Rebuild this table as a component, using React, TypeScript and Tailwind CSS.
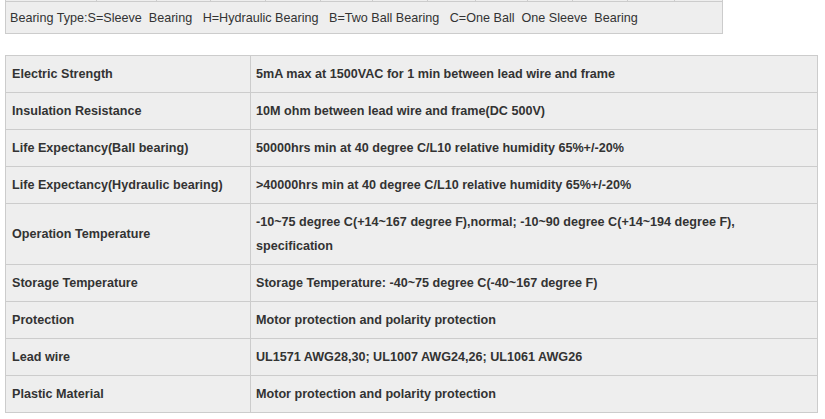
import React from "react";

const topCuts = [96, 156, 210, 265, 320, 372, 427, 475, 527, 572, 627, 674, 722];

const rows: [string, React.ReactNode][] = [
  ["Electric Strength", "5mA max at 1500VAC for 1 min between lead wire and frame"],
  ["Insulation Resistance", "10M ohm between lead wire and frame(DC 500V)"],
  ["Life Expectancy(Ball bearing)", "50000hrs min at 40 degree C/L10 relative humidity 65%+/-20%"],
  ["Life Expectancy(Hydraulic bearing)", ">40000hrs min at 40 degree C/L10 relative humidity 65%+/-20%"],
  [
    "Operation Temperature",
    <>
      -10~75 degree C(+14~167 degree F),normal; -10~90 degree C(+14~194 degree F),
      <br />
      specification
    </>,
  ],
  ["Storage Temperature", "Storage Temperature: -40~75 degree C(-40~167 degree F)"],
  ["Protection", "Motor protection and polarity protection"],
  ["Lead wire", "UL1571 AWG28,30; UL1007 AWG24,26; UL1061 AWG26"],
  ["Plastic Material", "Motor protection and polarity protection"],
];

const App = () => {
  let prev = 5;
  return (
    <div className="w-[825px] h-[419px] bg-white text-[12.6px] text-[#333] font-['Liberation_Sans',Arial,sans-serif] overflow-hidden">
      <div className="ml-[5px] w-[718px]">
        <div className="flex h-[1px] border-l border-[#ccc]">
          {topCuts.map((x) => {
            const w = x - prev;
            prev = x;
            return <div key={x} className="h-[1px] border-r border-[#ccc] bg-[#eee]" style={{ width: w }} />;
          })}
        </div>
        <div className="h-[33px] border border-[#ccc] bg-[#eee] pl-[4px] pt-[1px] leading-[30px] whitespace-pre">
          Bearing Type:S=Sleeve  Bearing   H=Hydraulic Bearing   B=Two Ball Bearing   C=One Ball  One Sleeve  Bearing
        </div>
      </div>

      <div className="ml-[5px] mt-[21px] w-[813px] border-x border-t border-[#ccc] bg-[#eee] font-bold">
        {rows.map(([label, value]) => (
          <div key={label} className="flex border-b border-[#ccc]">
            <div className="w-[245px] shrink-0 border-r border-[#ccc] px-[6px] py-[6px] leading-[24px] flex items-center">
              {label}
            </div>
            <div className="flex-1 px-[5px] py-[6px] leading-[24px]">{value}</div>
          </div>
        ))}
      </div>
    </div>
  );
};

export default App;
